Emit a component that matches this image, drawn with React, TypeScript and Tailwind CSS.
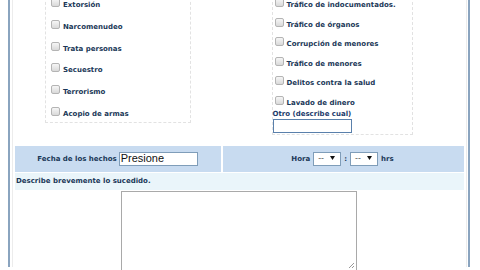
import React from "react";

const font = { fontFamily: '"DejaVu Sans", Verdana, sans-serif' };

function Box() {
  return (
    <span className="block w-[9px] h-[9px] shrink-0 rounded-[2px] border border-[#b4b4b4] bg-gradient-to-b from-[#f6f6f6] to-[#d9d9d9]" />
  );
}

function Item({ label, pl }: { label: string; pl: string }) {
  return (
    <div className={`flex items-start h-[10px] ${pl}`}>
      <Box />
      <span className="ml-[3px] mt-[3px] leading-[8px] whitespace-nowrap text-[7px] font-bold text-[#1b3858]">
        {label}
      </span>
    </div>
  );
}

function Select() {
  return (
    <div className="flex items-center justify-between w-[28px] h-[14px] border border-[#7f9db9] bg-white pl-[4px] pr-[5px]">
      <span className="text-[8px] leading-none text-[#555]">--</span>
      <svg width="5" height="5" viewBox="0 0 5 5">
        <path d="M0 0 H5 L2.5 4 Z" fill="#111" />
      </svg>
    </div>
  );
}

export default function App() {
  const left = ["Extorsión", "Narcomenudeo", "Trata personas", "Secuestro", "Terrorismo", "Acopio de armas"];
  const right = [
    "Tráfico de indocumentados.",
    "Tráfico de órganos",
    "Corrupción de menores",
    "Tráfico de menores",
    "Delitos contra la salud",
    "Lavado de dinero",
  ];
  return (
    <div className="w-[480px] h-[270px] overflow-hidden bg-white" style={font}>
      <div className="ml-[8px] w-[462px] h-[270px] border-l-2 border-r-2 border-[#8aa4bf]">
        <div className="ml-[2px] mr-[1px] h-[270px] border-l border-r border-[#ececec] px-[2px]">
          <div className="flex -mt-[3px] items-start">
            <div className="w-[206px] flex justify-center">
              <div className="w-[146px] border border-dashed border-[#e2e2e2] pb-[5px] flex flex-col gap-[11.75px]">
                {left.map((l) => (
                  <Item key={l} label={l} pl="pl-[5px]" />
                ))}
              </div>
            </div>
            <div className="w-[242px] flex justify-center">
              <div className="w-[141px] border border-dashed border-[#e2e2e2] pb-[1px]">
                <div className="flex flex-col gap-[9.6px]">
                  {right.map((l) => (
                    <Item key={l} label={l} pl="pl-[2px]" />
                  ))}
                </div>
                <div className="mt-[4px] text-[7px] font-bold leading-[8px] text-[#1d3b6b] whitespace-nowrap">
                  Otro (describe cual)
                </div>
                <div className="mt-[1px] w-[79px] h-[14px] border border-[#5a80ab] bg-white" />
              </div>
            </div>
          </div>

          <div className="mt-[11px] flex gap-[2px] h-[26px]">
            <div className="w-[206px] bg-[#c8dbf0] flex items-center justify-center gap-[2px] pr-[1px]">
              <span className="text-[7px] font-bold text-[#1b3858] whitespace-nowrap">Fecha de los hechos</span>
              <div
                className="w-[79px] h-[14px] border border-[#7f9db9] bg-white flex items-center pl-[1px] text-[11px] leading-none text-[#111]"
                style={{ fontFamily: '"Liberation Sans", Arial, sans-serif' }}
              >
                Presione
              </div>
            </div>
            <div className="flex-1 bg-[#c8dbf0] flex items-center justify-center gap-[3px] pr-[2px]">
              <span className="text-[7px] font-bold text-[#1b3858]">Hora</span>
              <Select />
              <span className="text-[7px] font-bold text-[#1b3858]">:</span>
              <Select />
              <span className="text-[7px] font-bold text-[#1b3858]">hrs</span>
            </div>
          </div>
          <div className="mt-[1px] h-[17px] bg-[#eaf5fa] flex items-center pl-[1px]">
            <span className="text-[7px] font-bold text-[#1b3858] whitespace-nowrap">Describe brevemente lo sucedido.</span>
          </div>
          <div className="mt-[1px] pl-[106px]">
            <div className="relative w-[236px] h-[80px] border border-[#a9a9a9] bg-white">
              <svg className="absolute right-[1px] bottom-[1px]" width="7" height="7" viewBox="0 0 7 7">
                <path d="M6 1 L1 6 M6 4 L4 6" stroke="#999" strokeWidth="1" />
              </svg>
            </div>
          </div>
        </div>
      </div>
    </div>
  );
}
